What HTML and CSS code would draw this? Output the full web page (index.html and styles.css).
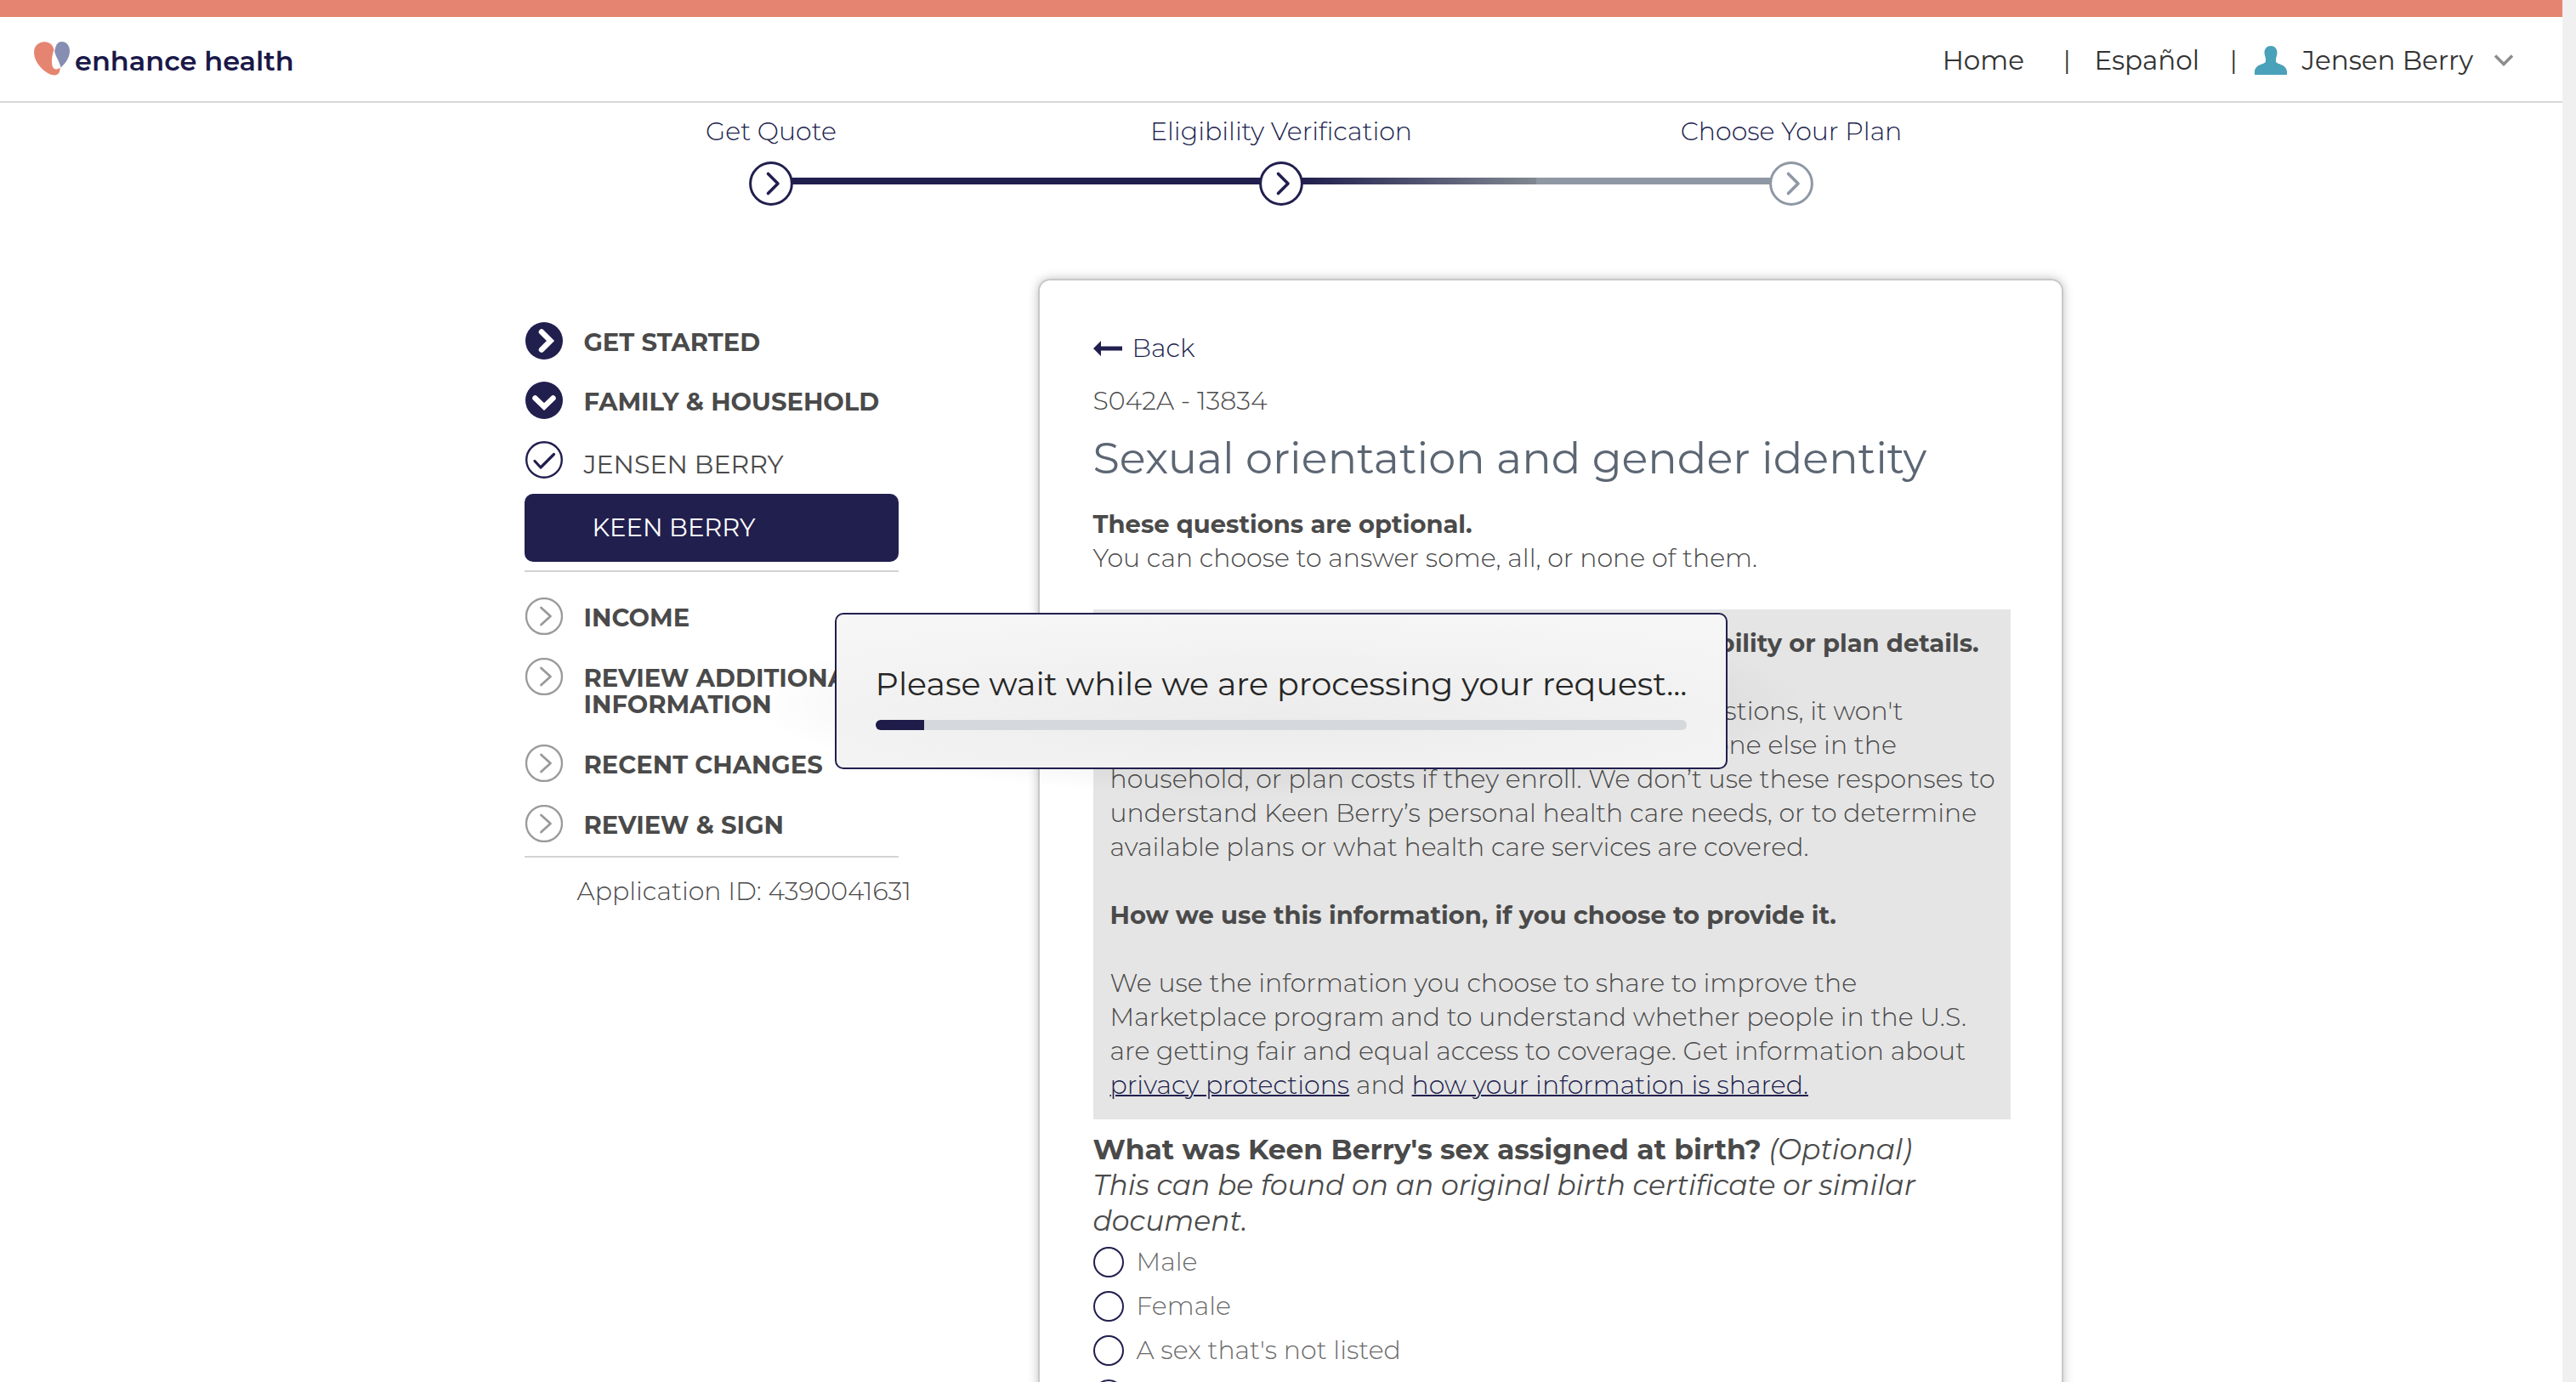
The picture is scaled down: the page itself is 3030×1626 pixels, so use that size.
FILE: index.html
```html
<!DOCTYPE html>
<html lang="en">
<head>
<meta charset="utf-8">
<meta name="viewport" content="width=device-width, initial-scale=1">
<title>Enhance Health - Sexual orientation and gender identity</title>
<link rel="stylesheet" href="styles.css">
</head>
<body>
<svg class="sprite" aria-hidden="true">
  <symbol id="step" viewBox="0 0 52 52"><circle cx="26" cy="26" r="24.4" fill="#fff" stroke="currentColor" stroke-width="3"/><path d="M22.500 14.500L34 26L22.500 37.500" fill="none" stroke="currentColor" stroke-width="3.600" stroke-linecap="round" stroke-linejoin="round"/></symbol>
  <symbol id="todo" viewBox="0 0 44 44"><circle cx="22" cy="22" r="21" fill="none" stroke="currentColor" stroke-width="2.300"/><path d="M18.500 12L29.500 22L18.500 32" fill="none" stroke="currentColor" stroke-width="2.800" stroke-linecap="round" stroke-linejoin="round"/></symbol>
  <symbol id="open" viewBox="0 0 44 44"><circle cx="22" cy="22" r="22" fill="currentColor"/><path d="M11.500 19.500L22 29.500L32.500 19.500" fill="none" stroke="#fff" stroke-width="6.500" stroke-linecap="round"/></symbol>
  <symbol id="closed" viewBox="0 0 44 44"><circle cx="22" cy="22" r="22" fill="currentColor"/><path d="M19 11.500L29.500 22L19 32.500" fill="none" stroke="#fff" stroke-width="6.500" stroke-linecap="round"/></symbol>
  <symbol id="done" viewBox="0 0 44 44"><circle cx="22" cy="22" r="20.800" fill="none" stroke="currentColor" stroke-width="2.400"/><path d="M11 23.500L18 31L33.500 15.500" fill="none" stroke="currentColor" stroke-width="3.200" stroke-linecap="round" stroke-linejoin="round"/></symbol>
</svg>
<div class="window">
  <div class="page">
    <header class="header">
      <a class="logo" href="#">
        <svg class="heart" viewBox="0 0 42 40" aria-hidden="true">
          <path fill="#e58571" d="M10 .5C17-.8 22 3 23.500 9.500C22 14 21 18 21 23C21 29 22.500 32.500 26 32.500C28 32.500 29 31.500 30.500 30.500C31 36 28.500 39.500 24.500 39.500C15 39.500 0 26 0 12.500C0 6 4 1.500 10 .5Z"/>
          <path fill="#878eb3" d="M25 8C26 3 28.500 0 32.500 0C38 0 42 4.500 42 11C42 19 37 25.500 31.500 30.500C30 23 24.500 16 24.200 11Z"/>
        </svg>
        <span>enhance health</span>
      </a>
      <nav class="nav">
        <a href="#">Home</a>
        <span class="sep">|</span>
        <a href="#">Español</a>
        <span class="sep tight">|</span>
        <button class="user" type="button">
          <svg class="avatar" viewBox="0 0 38 34" aria-hidden="true"><path fill="#4aa1ba" d="M19 0C23.500 0 26.500 3.500 26.500 8C26.500 11.500 25 13 25 16V18.500C26 22 37 21 38 30V34H0V30C1 21 12 22 13 18.500V16C13 13 11.500 11.500 11.500 8C11.500 3.500 14.500 0 19 0Z"/></svg>
          <span>Jensen Berry</span>
          <svg class="caret" viewBox="0 0 24 14" aria-hidden="true"><path d="M2 1.500L12 11.500L22 1.500" fill="none" stroke="#8c8c8c" stroke-width="3.500"/></svg>
        </button>
      </nav>
    </header>

    <ol class="steps">
      <li class="step"><span>Get Quote</span><svg><use href="#step"/></svg></li>
      <li class="step reached"><span>Eligibility Verification</span><svg><use href="#step"/></svg></li>
      <li class="step ahead"><span>Choose Your Plan</span><svg><use href="#step"/></svg></li>
    </ol>

    <div class="columns">
      <aside class="sidebar">
        <nav class="group">
          <a class="item on" href="#"><svg><use href="#closed"/></svg><span>GET STARTED</span></a>
          <a class="item on" href="#"><svg><use href="#open"/></svg><span>FAMILY &amp; HOUSEHOLD</span></a>
          <a class="item on member" href="#"><svg><use href="#done"/></svg><span>JENSEN BERRY</span></a>
          <button class="current" type="button">KEEN BERRY</button>
        </nav>
        <nav class="group later">
          <a class="item" href="#"><svg><use href="#todo"/></svg><span>INCOME</span></a>
          <a class="item" href="#"><svg><use href="#todo"/></svg><span>REVIEW ADDITIONAL INFORMATION</span></a>
          <a class="item" href="#"><svg><use href="#todo"/></svg><span>RECENT CHANGES</span></a>
          <a class="item" href="#"><svg><use href="#todo"/></svg><span>REVIEW &amp; SIGN</span></a>
        </nav>
        <p class="appid">Application ID: 4390041631</p>
      </aside>

      <main class="card">
        <a class="back" href="#"><svg viewBox="0 0 34 18" aria-hidden="true"><path fill="#211f4e" d="M0 9L9 0V6.500H34V11.500H9V18Z"/></svg>Back</a>
        <p class="code">S042A - 13834</p>
        <h1>Sexual orientation and gender identity</h1>
        <p><strong>These questions are optional.</strong><br>You can choose to answer some, all, or none of them.</p>
        <section class="note">
          <p><strong>These answers will not affect Keen Berry’s eligibility or plan details.</strong></p>
          <p>If Keen Berry chooses to answer any of these questions, it won't<br>affect their own eligibility, or the eligibility of anyone else in the<br>household, or plan costs if they enroll. We don’t use these responses to<br>understand Keen Berry’s personal health care needs, or to determine<br>available plans or what health care services are covered.</p>
          <p><strong>How we use this information, if you choose to provide it.</strong></p>
          <p>We use the information you choose to share to improve the<br>Marketplace program and to understand whether people in the U.S.<br>are getting fair and equal access to coverage. Get information about<br><a href="#">privacy protections</a> and <a href="#">how your information is shared.</a></p>
        </section>
        <fieldset class="question">
          <legend><b>What was Keen Berry's sex assigned at birth?</b> <em>(Optional)<br>This can be found on an original birth certificate or similar<br>document.</em></legend>
          <label><input type="radio" name="sex">Male</label>
          <label><input type="radio" name="sex">Female</label>
          <label><input type="radio" name="sex">A sex that's not listed</label>
          <label><input type="radio" name="sex">Not sure</label>
        </fieldset>
      </main>
    </div>

    <div class="overlay">
      <div class="dialog" role="alertdialog" aria-labelledby="wait">
        <p id="wait">Please wait while we are processing your request...</p>
        <div class="track" role="progressbar" aria-labelledby="wait" aria-valuenow="6"><div class="fill" style="width: 6%"></div></div>
      </div>
    </div>
  </div>
  <div class="gutter"></div>
</div>
</body>
</html>
```
FILE: styles.css
```css
:root {
  --navy: #211f4e;
  --text: #4a4a4a;
  --rule: #d3d3d3;
}
* { box-sizing: border-box; }
body {
  margin: 0;
  background: #fff;
  color: var(--text);
  font: 300 30px/40px Montserrat, Inter, "Open Sans", sans-serif;
}
p, h1, ol { margin: 0; padding: 0; }
a { color: inherit; text-decoration: none; }
button { font: inherit; color: inherit; border: 0; padding: 0; background: none; }
strong { font-size: 29px; font-weight: 700; }
.sprite { display: none; }

.window { display: flex; height: 100vh; overflow: hidden; }
.page { flex: 1; position: relative; overflow: hidden; }
.gutter { width: 16px; background: #f0f0f0; }

.header {
  display: flex;
  justify-content: space-between;
  align-items: center;
  padding: 0 57px 0 40px;
  height: 121px;
  border-top: 20px solid #e58571;
  border-bottom: 2px solid #d8d8d8;
}
.logo { display: flex; align-items: center; gap: 6px; color: #1a1848; font-size: 32px; font-weight: 600; }
.logo span { padding-top: 4px; }
.heart { width: 42px; height: 40px; margin-bottom: 2px; }
.nav { display: flex; align-items: center; padding-top: 2px; color: #333; font-size: 31px; font-weight: 400; }
.sep { margin: 0 28px 0 46px; font-size: 29px; }
.sep.tight { margin: 0 20px 0 36px; }
.user { display: flex; align-items: center; }
.avatar { width: 38px; height: 34px; margin-right: 18px; }
.caret { width: 24px; height: 14px; margin-left: 24px; }

.steps { display: flex; justify-content: center; list-style: none; padding-top: 14px; color: var(--navy); }
.step { position: relative; width: 600px; display: flex; flex-direction: column; align-items: center; gap: 15px; }
.step svg { width: 52px; height: 52px; position: relative; color: var(--navy); }
.step.ahead svg { color: #8e98a4; }
.step + .step::before {
  content: "";
  position: absolute;
  right: 325px;
  bottom: 25px;
  width: 550px;
  height: 8px;
  background: var(--navy);
}
.step.ahead::before { background: linear-gradient(90deg, var(--navy), #808890 50%, #8e98a4 50%); }

.columns { display: flex; justify-content: center; align-items: flex-start; gap: 164px; padding: 86px 0 0 29px; }
.sidebar { width: 440px; padding-top: 51px; }
.group { display: flex; flex-direction: column; gap: 26px; padding-bottom: 10px; border-bottom: 2px solid var(--rule); }
.group.later { gap: 27px; padding-top: 30px; padding-bottom: 16px; }
.item { display: flex; align-items: flex-start; gap: 25px; font-size: 29px; font-weight: 700; line-height: 31px; }
.item svg { flex: none; width: 44px; height: 44px; margin-left: 1px; color: #9a9a9a; }
.item.on svg { color: var(--navy); }
.item span { padding: 8px 0 5px; }
.item.member { font-size: 30px; font-weight: 400; }
.item.member span { padding-top: 12px; padding-bottom: 1px; }
.current {
  height: 80px;
  margin-top: -8px;
  padding-left: 80px;
  border-radius: 10px;
  background: var(--navy);
  color: #fff;
  font-size: 29px;
  font-weight: 400;
  text-align: left;
}
.appid { margin: 20px -20px 0 62px; }

.card {
  width: 1206px;
  padding: 60px 60px 60px 63px;
  border: 2px solid #c8c8c8;
  border-radius: 14px;
  box-shadow: 0 0 12px rgba(0, 0, 0, .25);
}
.back { display: flex; align-items: center; gap: 12px; color: var(--navy); }
.back svg { width: 34px; height: 18px; }
.code { margin-top: 22px; }
h1 { margin: 15px 0 26px; color: #5c6673; font-size: 51px; font-weight: 400; line-height: 64px; }
.note { display: grid; gap: 40px; margin-top: 40px; padding: 20px; background: #e5e5e5; white-space: nowrap; }
.note a { color: var(--navy); text-decoration: underline; text-decoration-thickness: 2px; }
.question { display: flex; flex-direction: column; gap: 16px; margin: 14px 0 0; padding: 0; border: 0; }
.question legend { padding: 0; margin-bottom: 10px; font-size: 33px; font-weight: 400; line-height: 42px; white-space: nowrap; }
.question label { display: flex; align-items: center; gap: 15px; height: 36px; color: #6c6c6c; }
.question input { appearance: none; width: 36px; height: 36px; margin: 0; border: 2px solid var(--navy); border-radius: 50%; }

.overlay { position: absolute; inset: 0; display: grid; place-items: center; }
.overlay::before {
  content: "";
  grid-area: 1 / 1;
  width: 1240px;
  height: 220px;
  margin-top: 30px;
  background: radial-gradient(closest-side, rgba(0, 0, 0, .04), rgba(0, 0, 0, .03) 80%, transparent);
}
.dialog {
  grid-area: 1 / 1;
  position: relative;
  padding: 54px 46px 44px;
  border: 2px solid var(--navy);
  border-radius: 10px;
  background: radial-gradient(ellipse 80% 70% at 50% 68%, #ececec, #f6f6f6);
  color: #262626;
  font-size: 38px;
  font-weight: 400;
  line-height: 56px;
  white-space: nowrap;
}
.track { margin-top: 14px; height: 12px; border-radius: 6px; background: #d5d9dd; overflow: hidden; }
.fill { height: 100%; background: #1f1c4a; }
```
